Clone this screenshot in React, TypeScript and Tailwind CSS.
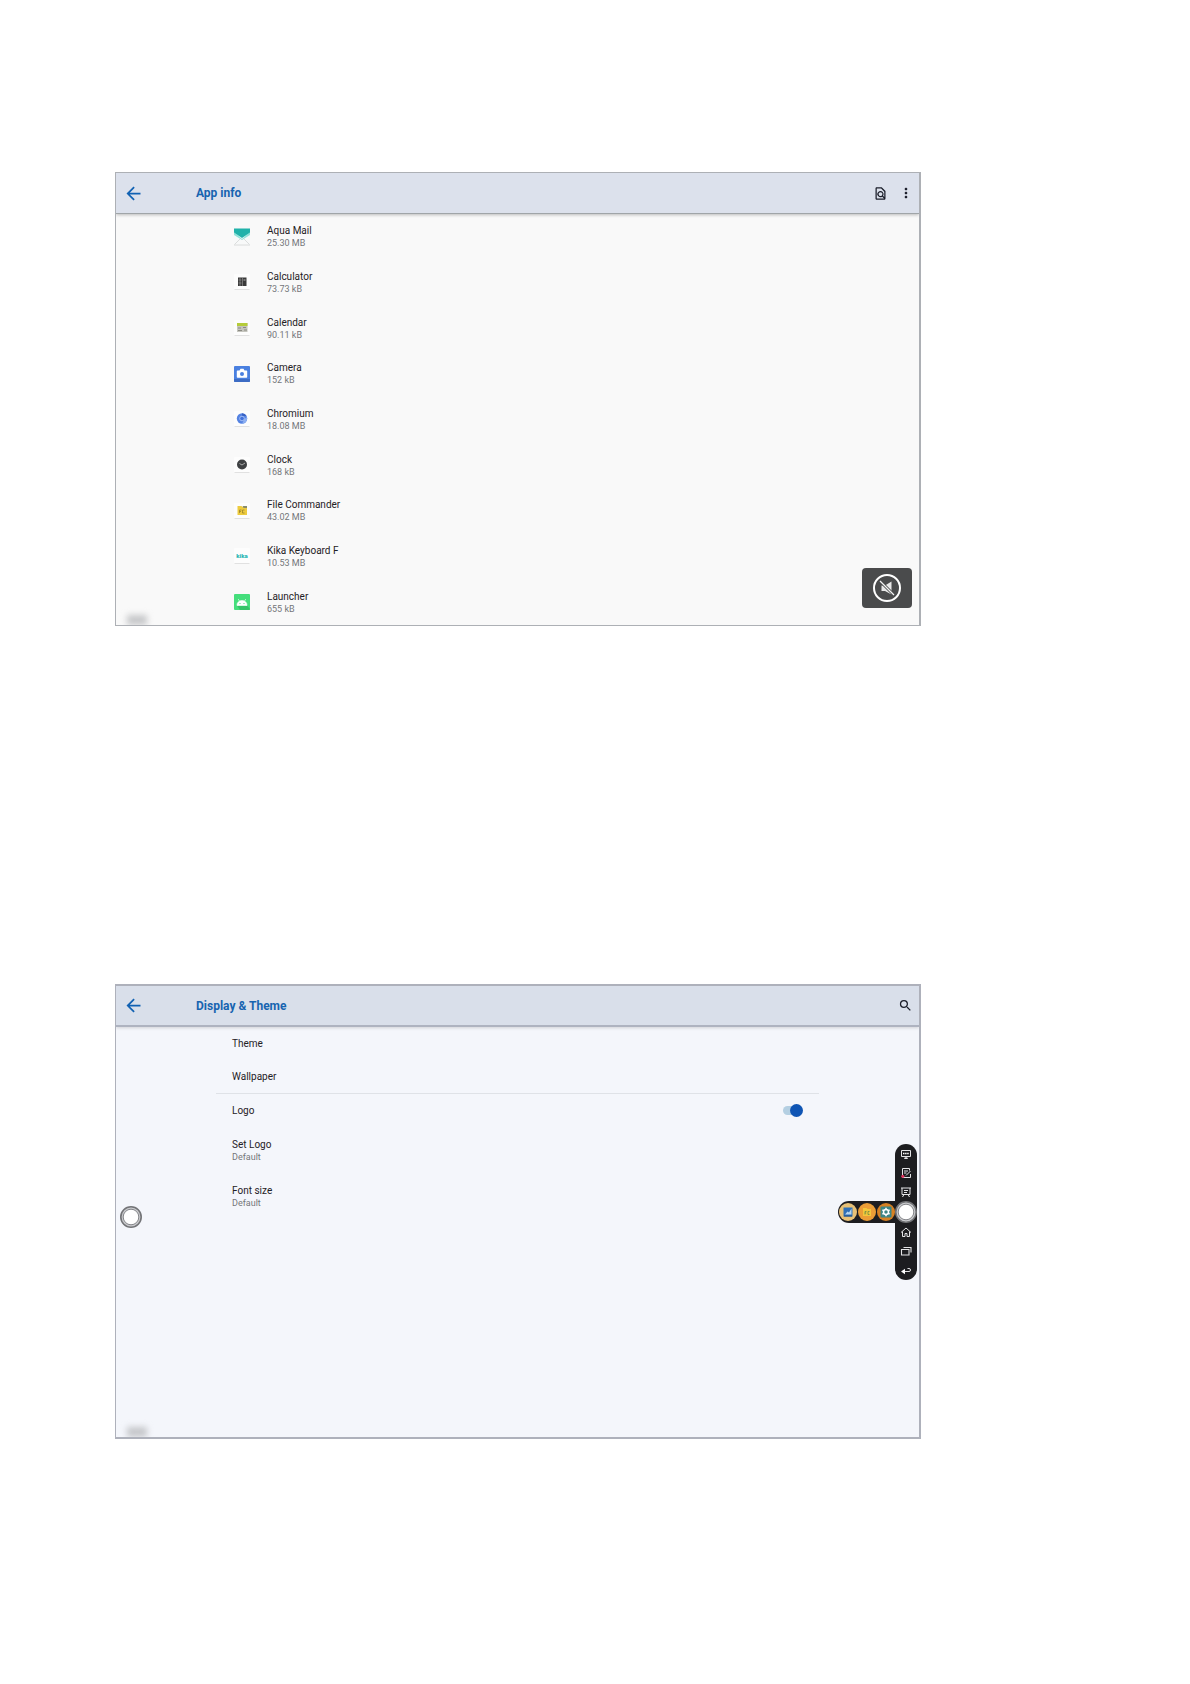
import type { ReactNode } from "react";
import { MdArrowBack, MdMoreVert, MdOutlineFindInPage, MdSearch } from "react-icons/md";

const iconProps = { viewBox: "0 0 16 18", className: "h-[18px] w-4", "aria-hidden": true } as const;

// small launcher icons sit on a white tile with a thin shadow line
function Tile({ children }: { children: ReactNode }) {
  return (
    <svg {...iconProps}>
      <rect x="0" y="1" width="16" height="16" rx="1" fill="#fdfdfd" />
      <path d="M.5 16.5h15" stroke="#d9d9d9" strokeWidth=".8" />
      {children}
    </svg>
  );
}

const apps = [
  {
    name: "Aqua Mail",
    size: "25.30 MB",
    icon: (
      <svg {...iconProps}>
        <rect x="0" y="1" width="16" height="16" fill="#f8f9f9" />
        <path d="M0 4l8 7 8-7v3l-8 5-8-5z" fill="#8fe3da" />
        <path d="M0 .5h16V4.500l-8 5.500-8-5.500z" fill="#20b2aa" />
        <path d="M.5 16.500L6 11M15.500 16.500L10 11M0 17h16" fill="none" stroke="#d3d6d6" strokeWidth=".8" />
      </svg>
    ),
  },
  {
    name: "Calculator",
    size: "73.73 kB",
    icon: (
      <Tile>
        <rect x="4" y="4.500" width="8.500" height="8.500" fill="#3a3a3a" />
        <path d="M4.500 7h3M4.500 10h3M6 5v8M8.500 5v8" stroke="#909090" strokeWidth=".7" />
        <rect x="9.500" y="6" width="2" height="2" fill="#777" />
      </Tile>
    ),
  },
  {
    name: "Calendar",
    size: "90.11 kB",
    icon: (
      <Tile>
        <rect x="3" y="4" width="10.500" height="9" fill="#c5c5be" />
        <rect x="3" y="4" width="10.500" height="3" fill="#b5cc3a" />
        <path d="M4 9h3M9 8.500h3M4 11.500h4M10 11h3" stroke="#85857c" strokeWidth=".9" />
      </Tile>
    ),
  },
  {
    name: "Camera",
    size: "152 kB",
    icon: (
      <svg {...iconProps}>
        <rect x="0" y="1" width="16" height="16" rx="1" fill="#4a80e0" />
        <path d="M0 14h16v2a1 1 0 0 1-1 1H1a1 1 0 0 1-1-1z" fill="#3d6cc4" />
        <path d="M3.500 5.500h2L6.500 3.800h3l1 1.700h2a.7.7 0 0 1 .7.700V12a.7.700 0 0 1-.7.700h-9a.7.700 0 0 1-.7-.7V6.200a.7.700 0 0 1 .7-.7z" fill="#fff" />
        <circle cx="8" cy="9" r="2" fill="#4a80e0" />
      </svg>
    ),
  },
  {
    name: "Chromium",
    size: "18.08 MB",
    icon: (
      <Tile>
        <circle cx="8" cy="8.500" r="5.200" fill="#5583e2" />
        <path d="M8 3.300a5.200 5.200 0 0 1 4.500 2.600H8z" fill="#3862c4" />
        <path d="M13 7a5.200 5.200 0 0 1-5 6.700L10.500 9z" fill="#8db0f2" />
        <circle cx="8" cy="8.500" r="2.300" fill="#4273dc" stroke="#b9cdf7" strokeWidth=".8" />
      </Tile>
    ),
  },
  {
    name: "Clock",
    size: "168 kB",
    icon: (
      <Tile>
        <circle cx="8" cy="8.500" r="5" fill="#3f4143" />
        <path d="M5.500 7.500L8 9l3-2" fill="none" stroke="#c4c4c4" strokeWidth=".8" />
      </Tile>
    ),
  },
  {
    name: "File Commander",
    size: "43.02 MB",
    icon: (
      <Tile>
        <path d="M3.500 4h4l1 1h4.500v8H3.500z" fill="#edcb3f" />
        <path d="M8.500 4h4.500v2h-3.500z" fill="#8a8c6c" />
        <path d="M5.500 11V8h2M5.500 9.500h1.500M10.500 8h-2v3h2" fill="none" stroke="#907a29" strokeWidth=".7" />
      </Tile>
    ),
  },
  {
    name: "Kika Keyboard F",
    size: "10.53 MB",
    icon: (
      <Tile>
        <text x="8" y="10.500" textAnchor="middle" fontSize="6" fontWeight="900" fill="#28b5b3">
          kika
        </text>
      </Tile>
    ),
  },
  {
    name: "Launcher",
    size: "655 kB",
    icon: (
      <svg {...iconProps}>
        <rect x="0" y="1" width="16" height="16" rx="1" fill="#45de7c" />
        <path d="M3 12.500h10l3 3.500a1 1 0 0 1-1 1H6z" fill="#36c468" />
        <path d="M3 12a5 4.500 0 0 1 10 0v.5H3zM4.200 6l1.500 2.500M11.800 6l-1.500 2.500" fill="#fff" stroke="#fff" strokeWidth=".6" />
        <circle cx="6" cy="10.500" r=".6" fill="#3ddc74" />
        <circle cx="10" cy="10.500" r=".6" fill="#3ddc74" />
      </svg>
    ),
  },
];

function TopBar({ title, className, children }: { title: string; className: string; children: ReactNode }) {
  return (
    <header className={`flex shrink-0 items-center pr-[5px] pl-[7px] ${className}`}>
      <button type="button" aria-label="Back" className="flex w-5 justify-center text-[#1262b3]">
        <MdArrowBack className="size-[21px] shrink-0" />
      </button>
      <h2 className="ml-[53px] flex-1 text-[12px] leading-4 font-bold text-[#1764b0]">{title}</h2>
      <div className="flex items-center gap-[10px] text-[#1b1e2a]">{children}</div>
    </header>
  );
}

function Label({ name, detail }: { name: string; detail?: string }) {
  return (
    <div>
      <div className="text-[10px] leading-[13px] text-[#1f2125]">{name}</div>
      {detail && <div className="text-[9px] leading-3 text-[#74767a]">{detail}</div>}
    </div>
  );
}

function Smudge() {
  return <div className="absolute bottom-0 left-[11px] h-[10px] w-[20px] bg-[#b9babd]/80 blur-[3px]" />;
}

function AppInfo() {
  return (
    <section className="relative flex h-[454px] flex-col overflow-hidden border border-r-2 border-[#adb0b5] bg-[#f9f9f9]">
      <TopBar title="App info" className="h-[41px] border-b border-[#a0a5a8] bg-[#dce1ec] shadow-[0_1px_3px_rgba(0,0,0,0.25)]">
        <button type="button" aria-label="Find in page" className="flex w-4 justify-center">
          <MdOutlineFindInPage className="size-[15px]" />
        </button>
        <button type="button" aria-label="More options">
          <MdMoreVert className="size-4" />
        </button>
      </TopBar>
      <ul className="grid flex-1 auto-rows-fr pl-[118px]">
        {apps.map((app) => (
          <li key={app.name} className="flex items-center gap-[17px]">
            {app.icon}
            <Label name={app.name} detail={app.size} />
          </li>
        ))}
      </ul>
      <Smudge />
      <button
        type="button"
        aria-label="Muted"
        className="absolute right-[7px] bottom-[17px] flex h-10 w-[50px] items-center justify-center rounded-[4px] bg-[#4a4b4c]"
      >
        <svg viewBox="0 0 30 30" className="size-[30px]">
          <circle cx="15" cy="15" r="13" fill="none" stroke="#fff" strokeWidth="2" />
          <path d="M9.500 12.500h3.500L19.500 8.500v13L13 18H9.500z" fill="#e9e9e9" />
          <path d="M8 8l14 14" stroke="#4a4b4c" strokeWidth="3" />
          <path d="M8 8l14 14" stroke="#f4f4f4" strokeWidth="1.200" />
        </svg>
      </button>
    </section>
  );
}

const line = { fill: "none", stroke: "#e4e4e6", strokeWidth: 1 } as const;

const topTools = [
  {
    name: "Whiteboard",
    icon: (
      <>
        <path d="M1.500 2.500h9v6h-9zM6 8.500l-1.500 2h3z" {...line} />
        <path d="M3 5.500h6" stroke="#fff" strokeWidth="1.500" strokeDasharray="1.500 .6" />
      </>
    ),
  },
  {
    name: "Annotate",
    icon: (
      <>
        <path d="M10.500 7v3.500h-8v-9h7v2M4 4h4M4 6h2.500M6 8.500l4.500-4.500" {...line} />
        <circle cx="2.800" cy="9.300" r="1.600" fill="#e0325c" />
      </>
    ),
  },
  {
    name: "Presentation",
    icon: <path d="M1 2h10M2 2v6.500h8V2M4 4.500h4M4 6.500h3M4 8.500l-1.500 2.500M8 8.500l1.500 2.500" {...line} />,
  },
];

const bottomTools = [
  { name: "Home", icon: <path d="M1 6.500l5-4.500 5 4.500M2.500 5.500v5h2.500V7.500h2v3h2.500v-5" {...line} /> },
  { name: "Recent apps", icon: <path d="M1.500 4.500h7.500v5.500h-7.500zM3.500 2.500h7.500v5" {...line} strokeWidth={1.1} /> },
  {
    name: "Return",
    icon: (
      <>
        <path d="M4 7.500h5a1.500 1.500 0 0 0 0-3H7.500" {...line} />
        <path d="M1 7.500L5 4.800v5.400z" fill="#fff" />
      </>
    ),
  },
];

const shortcuts = [
  {
    name: "Gallery",
    icon: (
      <>
        <circle cx="9" cy="9" r="9" fill="#e8c176" />
        <path d="M4.500 4.500h9v9h-9z" fill="#2f70b8" />
        <path d="M6 11.500L8.500 8.500 10 9.500 12.500 5.500v6z" fill="#b5d5ef" />
        <path d="M5 13h8" stroke="#244e80" />
      </>
    ),
  },
  {
    name: "Files",
    icon: (
      <>
        <circle cx="9" cy="9" r="9" fill="#eb9d36" />
        <path d="M5 5h3.500l1 1H13v7H5z" fill="#f3c63b" />
        <path d="M7 11.500V8.500h1.500M7 10h1.200M11.500 8.500h-1.500v3h1.500" fill="none" stroke="#6b8a45" strokeWidth=".8" />
      </>
    ),
  },
  {
    name: "Settings",
    icon: (
      <>
        <circle cx="9" cy="9" r="9" fill="#d78123" />
        <rect x="3.500" y="3.500" width="11" height="11" rx="1" fill="#3d8586" />
        <circle cx="9" cy="9" r="2.500" fill="none" stroke="#fff" strokeWidth="1.500" />
        <path d="M9 4.800v1.700M9 11.500v1.700M5.400 6.900l1.500.9M11.100 10.200l1.500.9M5.400 11.100l1.500-.9M11.100 7.800l1.500-.9" stroke="#fff" strokeWidth="1.500" />
      </>
    ),
  },
];

function Tool({ name, children }: { name: string; children: ReactNode }) {
  return (
    <button type="button" aria-label={name}>
      <svg viewBox="0 0 12 12" className="size-3">
        {children}
      </svg>
    </button>
  );
}

function Knob() {
  return (
    <svg viewBox="0 0 22 22" className="size-[22px]">
      <circle cx="11" cy="11" r="10.200" fill="#c9cacd" stroke="#737477" strokeWidth="1.600" />
      <circle cx="11" cy="11" r="7.800" fill="#fff" stroke="#85868a" strokeWidth="1" />
    </svg>
  );
}

function FloatingToolbar() {
  return (
    <nav aria-label="Floating toolbar" className="absolute top-[158px] right-[2px] flex items-center">
      <div className="flex h-[22px] items-center gap-px rounded-l-full bg-[#1d1d20] pl-px">
        {shortcuts.map((s) => (
          <button key={s.name} type="button" aria-label={s.name}>
            <svg viewBox="0 0 18 18" className="size-[18px]">
              {s.icon}
            </svg>
          </button>
        ))}
      </div>
      <div className="flex w-[22px] flex-col items-center rounded-full bg-[#1d1d20] py-1">
        <div className="flex flex-col gap-[7px]">
          {topTools.map((t) => (
            <Tool key={t.name} name={t.name}>
              {t.icon}
            </Tool>
          ))}
        </div>
        <button type="button" aria-label="Collapse toolbar" className="my-[3px]">
          <Knob />
        </button>
        <div className="flex flex-col gap-[7px]">
          {bottomTools.map((t) => (
            <Tool key={t.name} name={t.name}>
              {t.icon}
            </Tool>
          ))}
        </div>
      </div>
    </nav>
  );
}

function DisplayTheme() {
  return (
    <section className="relative flex h-[455px] flex-col overflow-hidden border-2 border-l border-[#aeb1bb] bg-[#f4f6fb]">
      <TopBar title="Display & Theme" className="h-[41px] border-b-2 border-[#aeb3c0] bg-[#d9dfea] shadow-[0_1px_3px_rgba(0,0,0,0.15)]">
        <button type="button" aria-label="Search" className="pr-px">
          <MdSearch className="size-[15px]" />
        </button>
      </TopBar>
      <div className="mx-[100px]">
        <div className="border-b border-[#dfe2e7]">
          <div className="flex h-[33px] items-center pl-4">
            <Label name="Theme" />
          </div>
          <div className="flex h-[33px] items-center pl-4">
            <Label name="Wallpaper" />
          </div>
        </div>
        <label className="flex h-[33px] items-center justify-between pr-4 pl-4">
          <Label name="Logo" />
          <span className="relative flex h-[13px] w-5 items-center">
            <input
              type="checkbox"
              role="switch"
              defaultChecked
              className="peer h-[9px] w-4 appearance-none rounded-full bg-[#b4cfe2]"
            />
            <span className="absolute left-0 size-[13px] rounded-full bg-[#8d949c] peer-checked:left-[7px] peer-checked:bg-[#0f55b4]" />
          </span>
        </label>
        <div className="flex h-[46px] items-center pl-4">
          <Label name="Set Logo" detail="Default" />
        </div>
        <div className="flex h-[46px] items-center pl-4">
          <Label name="Font size" detail="Default" />
        </div>
      </div>
      <Smudge />
      <button type="button" aria-label="Open toolbar" className="absolute top-[220px] left-1">
        <Knob />
      </button>
      <FloatingToolbar />
    </section>
  );
}

export default function App() {
  return (
    <main className="flex min-h-screen flex-col gap-[358px] bg-white pt-[172px] pr-[269px] pb-[172px] pl-[115px] font-[Roboto,sans-serif]">
      <AppInfo />
      <DisplayTheme />
    </main>
  );
}
